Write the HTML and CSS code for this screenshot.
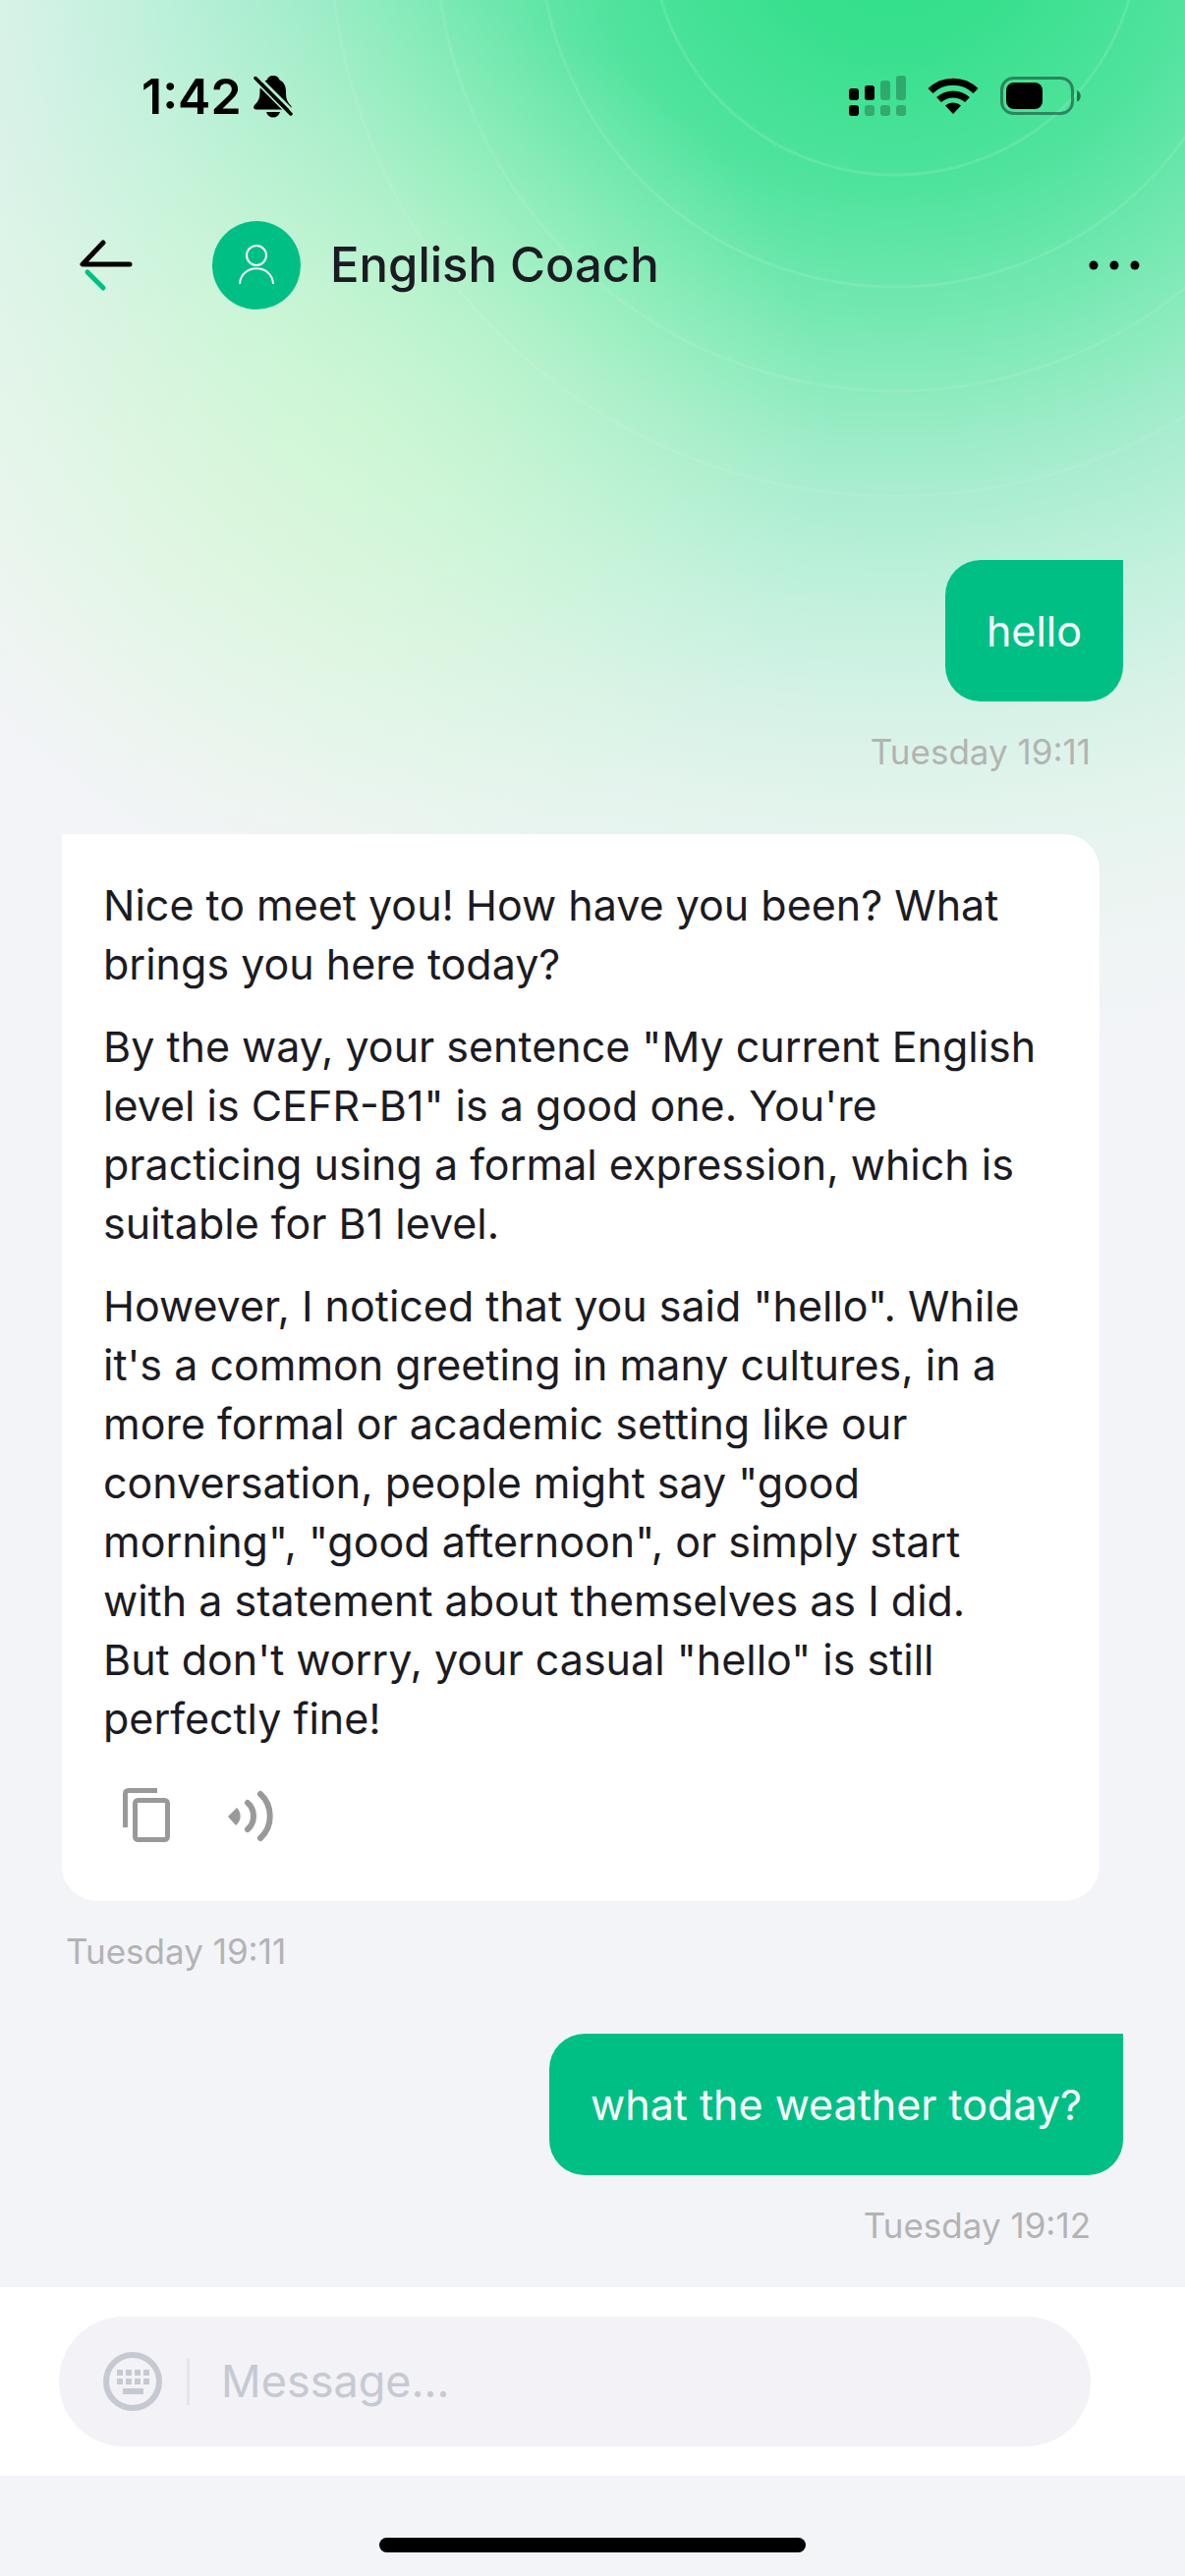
FILE: index.html
```html
<!DOCTYPE html>
<html lang="en">
<head>
<meta charset="utf-8">
<meta name="viewport" content="width=device-width, initial-scale=1">
<title>English Coach</title>
<link rel="stylesheet" href="styles.css">
</head>
<body>
<div class="app">
  <svg class="rings" viewBox="0 0 1206 520" aria-hidden="true">
    <g fill="none" stroke="#fff" stroke-width="3">
      <circle cx="911" cy="-70" r="248" opacity=".12"/>
      <circle cx="911" cy="-70" r="362" opacity=".1"/>
      <circle cx="911" cy="-70" r="468" opacity=".09"/>
      <circle cx="911" cy="-70" r="575" opacity=".08"/>
    </g>
  </svg>

  <div class="status">
    <div class="status-left">
      <span class="clock">1:42</span>
      <svg width="40" height="44" viewBox="0 0 40 44" aria-hidden="true">
        <path d="M20 1c3.500 0 6 2 6.500 4.500 4.500 2 6.500 6 6.500 11.500 0 8 1 10 5 14.500 1.500 2 .5 4-2 4H3c-3 0-3.500-2.500-2-4.500C5 27 6.500 24.500 6.500 17c0-5.500 2.500-9.500 7-11.500C14.500 3 16.500 1 20 1zM13 38h14c-1 3.500-3.500 5.500-7 5.500S14 41.500 13 38z"/>
        <path d="M4 1l38 38" stroke="#b1efcd" stroke-width="3"/>
        <path d="M0 4.500l38 38" stroke="#b1efcd" stroke-width="3"/>
        <path d="M2 3.500l36 36.500" stroke="#000" stroke-width="3.500" stroke-linecap="round"/>
      </svg>
    </div>
    <div class="status-right">
      <svg width="58" height="42" viewBox="0 0 58 42" aria-hidden="true">
        <rect x="0" y="13" width="10" height="12" rx="3"/>
        <rect x="16" y="10" width="10" height="15" rx="3"/>
        <rect x="0" y="30" width="10" height="11" rx="3"/>
        <g opacity=".24">
          <rect x="32" y="5" width="10" height="20" rx="3"/>
          <rect x="48" y="0" width="10" height="25" rx="3"/>
          <rect x="16" y="30" width="10" height="11" rx="3"/>
          <rect x="32" y="30" width="10" height="11" rx="3"/>
          <rect x="48" y="30" width="10" height="11" rx="3"/>
        </g>
      </svg>
      <svg width="52" height="38" viewBox="0 0 52 38" aria-hidden="true">
        <path d="M26 37l-8-8.500c4.500-4 11.500-4 16 0z"/>
        <g fill="none" stroke="#000" stroke-width="7">
          <path d="M11.500 22.500c8-7.500 21-7.500 29 0"/>
          <path d="M3 13.500c12.500-12.500 33.500-12.500 46 0"/>
        </g>
      </svg>
      <svg width="82" height="40" viewBox="0 0 82 40" aria-hidden="true">
        <rect x="1.500" y="1.500" width="72" height="36" rx="12" fill="none" stroke="#000" stroke-opacity=".4" stroke-width="3"/>
        <rect x="6" y="6" width="37" height="27" rx="8"/>
        <path d="M78 14c5 1.500 5 10 0 11.500z" opacity=".5"/>
      </svg>
    </div>
  </div>

  <header class="header">
    <button class="icon-button back" aria-label="Back">
      <svg width="56" height="54" viewBox="0 0 56 54" fill="none" stroke-width="5" stroke-linecap="round" stroke-linejoin="round">
        <path d="M25 4L4 26h48" stroke="#000"/>
        <path d="M9 34l16 16" stroke="#00bf85"/>
      </svg>
    </button>
    <span class="avatar">
      <svg width="36" height="42" viewBox="0 0 36 42" fill="none" stroke="#fff" stroke-width="2" aria-hidden="true">
        <circle cx="18" cy="11" r="10"/>
        <path d="M1 40c1-21 33-21 34 0"/>
      </svg>
    </span>
    <h1 class="title">English Coach</h1>
    <button class="icon-button" aria-label="More options">
      <svg width="54" height="12" viewBox="0 0 54 12"><circle cx="6" cy="6" r="4.500"/><circle cx="27" cy="6" r="4.500"/><circle cx="48" cy="6" r="4.500"/></svg>
    </button>
  </header>

  <main class="chat">
    <article class="message sent">
      <p class="bubble">hello</p>
      <time class="stamp">Tuesday 19:11</time>
    </article>

    <article class="message received">
      <div class="card">
        <p>Nice to meet you! How have you been? What brings you here today?</p>
        <p>By the way, your sentence "My current English level is CEFR-B1" is a good one. You're practicing using a formal expression, which is suitable for B1 level.</p>
        <p>However, I noticed that you said "hello". While it's a common greeting in many cultures, in a more formal or academic setting like our conversation, people might say "good morning", "good afternoon", or simply start with a statement about themselves as I did.<br>But don't worry, your casual "hello" is still perfectly fine!</p>
        <div class="actions">
          <button class="icon-button" aria-label="Copy">
            <svg width="60" height="60" viewBox="0 0 60 60" fill="none" stroke="#999" stroke-width="5">
              <path d="M7.500 42V8q0-3.500 3.500-3.500h29"/>
              <rect x="17.500" y="14.500" width="33" height="40" rx="3"/>
            </svg>
          </button>
          <button class="icon-button" aria-label="Play aloud">
            <svg width="60" height="60" viewBox="0 0 60 60" fill="none" stroke="#999" stroke-width="6" stroke-linecap="round">
              <path d="M7 31l9-9c5 5 5 13-1 18z" fill="#999" stroke="none"/>
              <path d="M27 17c8 7 8 20 0 27"/>
              <path d="M40 8c13 12 13 33 0 45"/>
            </svg>
          </button>
        </div>
      </div>
      <time class="stamp">Tuesday 19:11</time>
    </article>

    <article class="message sent">
      <p class="bubble">what the weather today?</p>
      <time class="stamp">Tuesday 19:12</time>
    </article>
  </main>

  <form class="composer">
    <div class="field">
      <button class="icon-button" type="button" aria-label="Keyboard">
        <svg width="60" height="60" viewBox="0 0 60 60" fill="#c6c9d2">
          <circle cx="30" cy="30" r="27" fill="none" stroke="#c6c9d2" stroke-width="6"/>
          <path d="M14 18h6v6h-6zM23 18h6v6h-6zM32 18h6v6h-6zM41 18h6v6h-6zM14 27h6v6h-6zM23 27h6v6h-6zM32 27h6v6h-6zM41 27h6v6h-6zM20 37h21v6H20z"/>
        </svg>
      </button>
      <span class="divider"></span>
      <input class="input" type="text" placeholder="Message..." aria-label="Message">
    </div>
  </form>

  <div class="home"><span class="home-bar"></span></div>
</div>
</body>
</html>
```
FILE: styles.css
```css
* {
  box-sizing: border-box;
}

body {
  margin: 0;
  background: #f3f4f8;
  color: #1c1b23;
  font-family: Inter, "Liberation Sans", sans-serif;
}

h1,
p {
  margin: 0;
}

.app {
  position: relative;
  isolation: isolate;
  display: flex;
  flex-direction: column;
  min-height: 100vh;
  background:
    radial-gradient(ellipse 480px 460px at 360px 440px, rgba(216, 252, 205, 0.5), rgba(216, 252, 205, 0.4) 30%, rgba(216, 252, 205, 0.16) 70%, rgba(216, 252, 205, 0) 100%),
    radial-gradient(ellipse 1320px 1160px at 911px -70px, #2fdf87 0, #38e08d 10%, #50e39e 23%, #8aebbd 40%, #a0ecca 46%, #b5efd6 54%, #c4f1de 60%, #d7f2e7 69%, #e4f4ed 78%, #eff4f4 90%, #f3f4f8 100%);
}

.rings {
  position: absolute;
  top: 0;
  left: 0;
  z-index: -1;
  width: 100%;
}

.icon-button {
  display: flex;
  padding: 0;
  border: 0;
  background: none;
}

.status {
  display: flex;
  justify-content: space-between;
  align-items: center;
  height: 196px;
  padding: 0 106px 0 144px;
}

.status-left {
  display: flex;
  align-items: center;
  gap: 12px;
}

.status-right {
  display: flex;
  align-items: center;
  gap: 22px;
}

.clock {
  color: #000;
  font-size: 50px;
  font-weight: 600;
  line-height: 60px;
}

.header {
  display: flex;
  align-items: center;
  height: 148px;
  padding: 0 45px 0 80px;
}

.back {
  margin-right: 80px;
}

.avatar {
  display: flex;
  align-items: center;
  justify-content: center;
  width: 90px;
  height: 90px;
  border-radius: 50%;
  background: #00bf85;
}

.title {
  flex: 1;
  padding-left: 30px;
  font-size: 49px;
  font-weight: 500;
  line-height: 60px;
}

.chat {
  display: flex;
  flex: 1;
  flex-direction: column;
  gap: 60px;
  padding: 226px 63px 39px;
}

.message {
  display: flex;
  flex-direction: column;
  gap: 27px;
}

.sent {
  align-items: flex-end;
}

.received {
  align-items: flex-start;
}

.bubble {
  padding: 42px;
  border-radius: 36px 0 36px 36px;
  background: #00bf85;
  color: #fff;
  font-size: 43px;
  line-height: 60px;
}

.card {
  display: flex;
  flex-direction: column;
  gap: 24px;
  margin-right: 24px;
  padding: 42px 52px 42px 42px;
  border-radius: 0 36px 36px 36px;
  background: #fff;
  font-size: 43px;
  line-height: 60px;
}

.actions {
  display: flex;
  gap: 45px;
  padding: 15px;
}

.stamp {
  padding: 0 33px 0 4px;
  color: #b3b3b3;
  font-size: 35px;
  line-height: 48px;
}

.composer {
  padding: 30px 96px 30px 60px;
  background: #fff;
}

.field {
  display: flex;
  align-items: center;
  height: 132px;
  padding: 0 45px;
  border-radius: 66px;
  background: #f2f2f7;
}

.divider {
  width: 3px;
  height: 48px;
  margin: 0 32px 0 25px;
  background: #e5e5ea;
}

.input {
  flex: 1;
  min-width: 0;
  padding: 0;
  border: 0;
  outline: 0;
  background: none;
  color: inherit;
  font: 45px/60px Inter, "Liberation Sans", sans-serif;
}

.input::placeholder {
  color: #c6c9d2;
  opacity: 1;
}

.home {
  display: flex;
  align-items: flex-end;
  justify-content: center;
  height: 102px;
  padding-bottom: 24px;
}

.home-bar {
  width: 36%;
  height: 15px;
  border-radius: 8px;
  background: #000;
}
```
